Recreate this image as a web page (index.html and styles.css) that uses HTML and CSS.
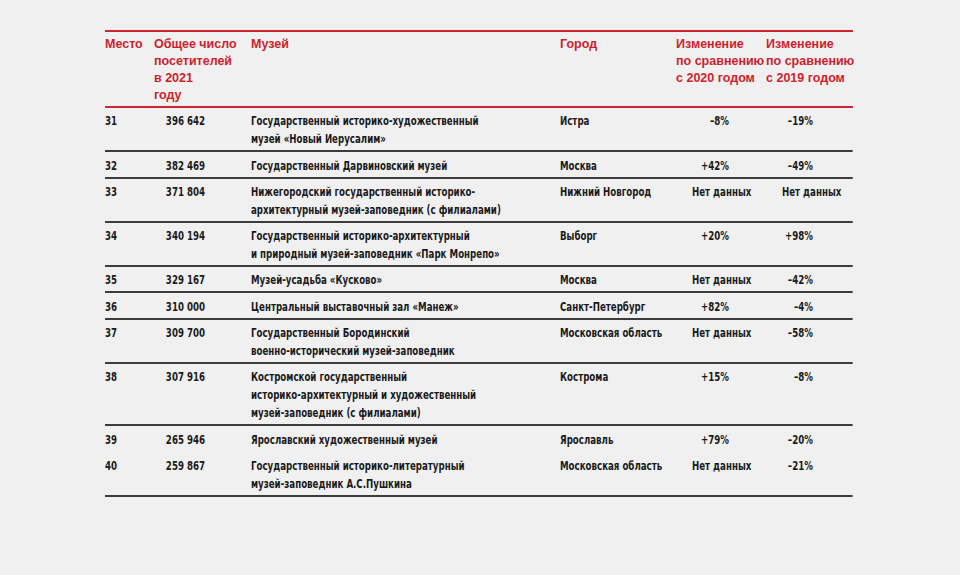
FILE: index.html
```html
<!DOCTYPE html>
<html lang="ru">
<head>
<meta charset="utf-8">
<title>Музеи</title>
<link rel="stylesheet" href="styles.css">
</head>
<body>
<div class="table">
  <div class="row head">
    <div class="c-place">Место</div>
    <div class="c-num">Общее число<br>посетителей<br>в 2021<br>году</div>
    <div class="c-name">Музей</div>
    <div class="c-city">Город</div>
    <div class="c-ch1">Изменение<br>по сравнению<br>с 2020 годом</div>
    <div class="c-ch2">Изменение<br>по сравнению<br>с 2019 годом</div>
  </div>
  <div class="rows">
    <div class="row">
      <div class="c-place">31</div><div class="c-num">396 642</div>
      <div class="c-name">Государственный историко-художественный<br>музей «Новый Иерусалим»</div>
      <div class="c-city">Истра</div><div class="c-ch1">–8%</div><div class="c-ch2">–19%</div>
    </div>
    <div class="row">
      <div class="c-place">32</div><div class="c-num">382 469</div>
      <div class="c-name">Государственный Дарвиновский музей</div>
      <div class="c-city">Москва</div><div class="c-ch1">+42%</div><div class="c-ch2">–49%</div>
    </div>
    <div class="row">
      <div class="c-place">33</div><div class="c-num">371 804</div>
      <div class="c-name">Нижегородский государственный историко-<br>архитектурный музей-заповедник (с филиалами)</div>
      <div class="c-city">Нижний Новгород</div><div class="c-ch1 na">Нет данных</div><div class="c-ch2 na">Нет данных</div>
    </div>
    <div class="row">
      <div class="c-place">34</div><div class="c-num">340 194</div>
      <div class="c-name">Государственный историко-архитектурный<br>и природный музей-заповедник «Парк Монрепо»</div>
      <div class="c-city">Выборг</div><div class="c-ch1">+20%</div><div class="c-ch2">+98%</div>
    </div>
    <div class="row">
      <div class="c-place">35</div><div class="c-num">329 167</div>
      <div class="c-name">Музей-усадьба «Кусково»</div>
      <div class="c-city">Москва</div><div class="c-ch1 na">Нет данных</div><div class="c-ch2">–42%</div>
    </div>
    <div class="row">
      <div class="c-place">36</div><div class="c-num">310 000</div>
      <div class="c-name">Центральный выставочный зал «Манеж»</div>
      <div class="c-city">Санкт-Петербург</div><div class="c-ch1">+82%</div><div class="c-ch2">–4%</div>
    </div>
    <div class="row">
      <div class="c-place">37</div><div class="c-num">309 700</div>
      <div class="c-name">Государственный Бородинский<br>военно-исторический музей-заповедник</div>
      <div class="c-city">Московская область</div><div class="c-ch1 na">Нет данных</div><div class="c-ch2">–58%</div>
    </div>
    <div class="row">
      <div class="c-place">38</div><div class="c-num">307 916</div>
      <div class="c-name">Костромской государственный<br>историко-архитектурный и художественный<br>музей-заповедник (с филиалами)</div>
      <div class="c-city">Кострома</div><div class="c-ch1">+15%</div><div class="c-ch2">–8%</div>
    </div>
    <div class="row noline">
      <div class="c-place">39</div><div class="c-num">265 946</div>
      <div class="c-name">Ярославский художественный музей</div>
      <div class="c-city">Ярославль</div><div class="c-ch1">+79%</div><div class="c-ch2">–20%</div>
    </div>
    <div class="row">
      <div class="c-place">40</div><div class="c-num">259 867</div>
      <div class="c-name">Государственный историко-литературный<br>музей-заповедник А.С.Пушкина</div>
      <div class="c-city">Московская область</div><div class="c-ch1 na">Нет данных</div><div class="c-ch2">–21%</div>
    </div>
  </div>
</div>
</body>
</html>
```

FILE: styles.css
```css
html, body {
  margin: 0;
  padding: 0;
  background: #f0f0f0;
  overflow: hidden;
}
body {
  padding: 30px 0 0 105px;
}
.table {
  width: 748px;
  border-top: 2px solid #cf2530;
  color: #1a1a1a;
}
.row {
  display: grid;
  white-space: nowrap;
}
/* header row: regular-width sans */
.row.head {
  grid-template-columns: 49px 97px 309px 116px 90px 87px;
  padding: 4px 0 2px;
  font-family: "Liberation Sans", Arial, sans-serif;
  font-weight: bold;
  font-size: 12.5px;
  line-height: 17px;
  color: #cc1f2d;
  border-bottom: 2px solid #cf2530;
}
/* body rows: condensed face, narrowed horizontally */
.rows {
  width: 971.4px;
  transform: scaleX(0.77);
  transform-origin: left top;
  font-family: "DejaVu Sans Condensed", "DejaVu Sans", sans-serif;
  font-weight: bold;
  font-size: 12.5px;
}
.rows .row {
  grid-template-columns: 63.6px 126px 401.3px 150.6px 116.9px 113px;
  padding: 4.3px 0 2px;
  line-height: 18px;
  border-bottom: 2px solid #3c3c3c;
}
.rows .row.noline {
  border-bottom: none;
  padding-bottom: 4px;
}
.rows .c-num {
  text-align: right;
  padding-right: 59.7px;
}
.rows .c-ch1 {
  text-align: right;
  padding-right: 48px;
}
.rows .c-ch2 {
  text-align: right;
  padding-right: 52px;
}
.rows .na {
  text-align: left;
  padding-left: 20.8px;
  padding-right: 0;
}
```
